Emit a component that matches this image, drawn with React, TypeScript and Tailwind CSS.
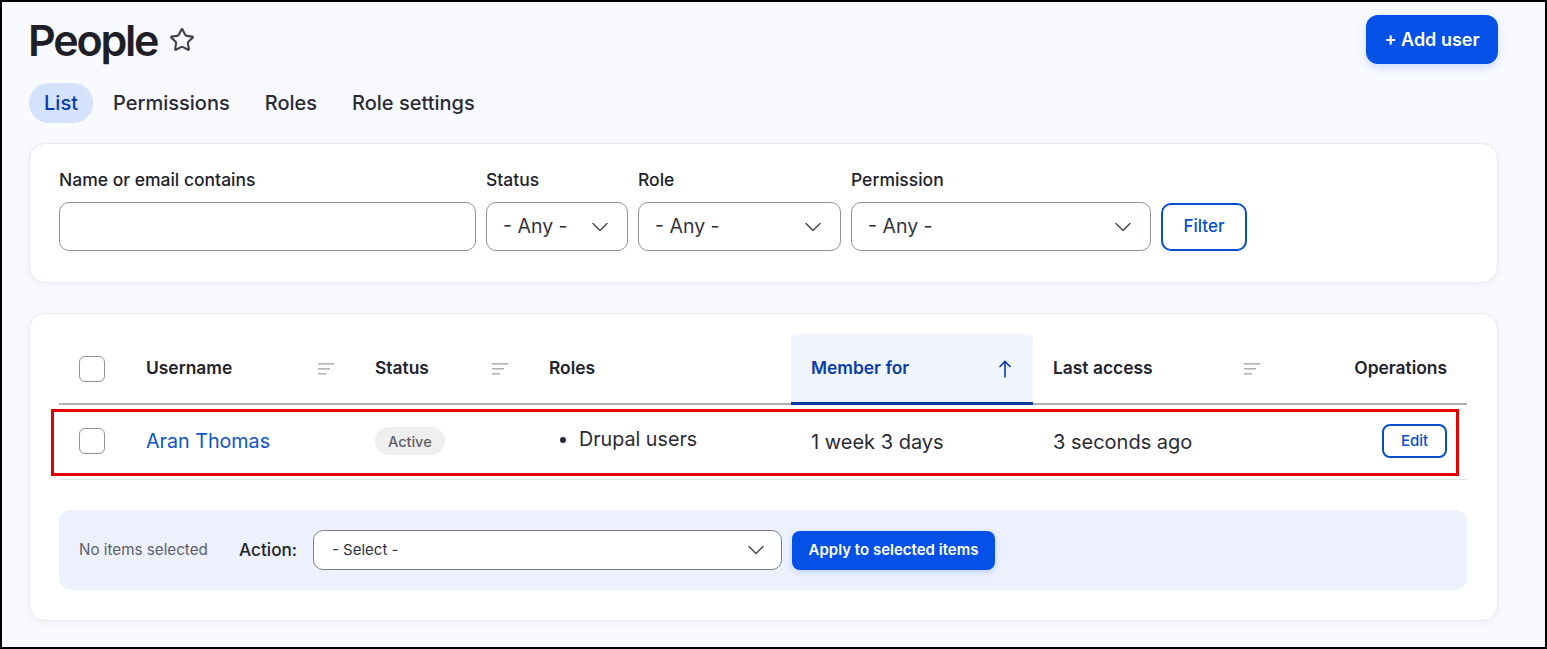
import React from 'react';
import { ChevronDown, Star } from 'lucide-react';

const SortIcon = () => (
  <svg width="16" height="12" viewBox="0 0 16 12" className="shrink-0" fill="#b4b4b8">
    <rect x="0" y="0" width="16" height="1.6" />
    <rect x="0" y="5" width="12" height="1.6" />
    <rect x="0" y="10" width="8" height="1.6" />
  </svg>
);

const SortedArrow = () => (
  <svg width="16" height="18" viewBox="0 0 16 18" fill="none" stroke="currentColor" strokeWidth="1.6" className="shrink-0">
    <path d="M8 17.5V1.5" />
    <path d="M2.5 7L8 1.5L13.5 7" />
  </svg>
);

const Checkbox = () => (
  <input
    type="checkbox"
    className="appearance-none block w-[26px] h-[26px] bg-white border border-[#8e929c] rounded-[6px]"
  />
);

const FakeSelect = ({ label, className }: { label: string; className: string }) => (
  <div
    className={`h-[49px] bg-white border border-[#919297] rounded-[10px] flex items-center justify-between pl-[16px] pr-[13px] text-[19.5px] text-[#33333d] ${className}`}
  >
    <span className="pt-px">{label}</span>
    <ChevronDown size={28} strokeWidth={1.15} className="text-[#44444c]" />
  </div>
);

const Field = ({ label, children }: { label: string; children: React.ReactNode }) => (
  <div className="flex flex-col gap-[10px]">
    <label className="text-[17.5px] leading-[24px] font-medium text-[#22222b]">{label}</label>
    {children}
  </div>
);

const HeadCell = ({ label }: { label: string }) => (
  <div className="flex items-center justify-between pl-5 pr-[21px] text-[17.4px] font-semibold text-[#22222b]">
    <span>{label}</span>
    <SortIcon />
  </div>
);

export default function App() {
  return (
    <div className="relative w-[1547px] h-[649px] overflow-hidden border-2 border-black bg-[#f8faff] font-['Inter',sans-serif]">
      <div className="pl-[27px] pr-[47px]">
        {/* Title */}
        <div className="flex items-start justify-between pt-[13px] h-[81px]">
          <div className="flex items-center gap-[12px] h-[50px]">
            <h1 className="-ml-px text-[43px] leading-[50px] font-semibold tracking-[-2.2px] text-[#1f1f28]">People</h1>
            <Star size={26} strokeWidth={2} className="text-[#44444c]" />
          </div>
          <button className="w-[132px] h-[49px] bg-[#0550e6] text-white rounded-[12px] text-[18px] font-semibold shadow-[0_3px_10px_rgba(5,80,230,0.2)]">
            + Add user
          </button>
        </div>

        {/* Tabs */}
        <nav className="flex items-center gap-[5px] h-[40px] text-[20px] font-medium text-[#2a2a35]">
          <a className="h-[40px] w-[64px] flex items-center justify-center rounded-full bg-[#d4e2fb] text-[#0a3cab]">List</a>
          <a className="px-[15px]">Permissions</a>
          <a className="px-[15px]">Roles</a>
          <a className="px-[15px]">Role settings</a>
        </nav>

        {/* Filters */}
        <section className="mt-[20px] h-[140px] bg-white rounded-[16px] border border-[#e8eaf0] shadow-[0_2px_8px_rgba(30,40,80,0.05)] px-[29px] pt-[24px] flex items-start gap-[10px]">
          <Field label="Name or email contains">
            <input className="w-[417px] h-[49px] bg-white border border-[#919297] rounded-[10px]" />
          </Field>
          <Field label="Status">
            <FakeSelect label="- Any -" className="w-[142px]" />
          </Field>
          <Field label="Role">
            <FakeSelect label="- Any -" className="w-[203px]" />
          </Field>
          <Field label="Permission">
            <FakeSelect label="- Any -" className="w-[300px]" />
          </Field>
          <button className="mt-[35px] w-[86px] h-[48px] bg-white border-2 border-[#0550c8] rounded-[10px] text-[17px] font-medium text-[#0550c8]">
            Filter
          </button>
        </section>

        {/* Users table */}
        <section className="mt-[30px] h-[308px] bg-white rounded-[16px] border border-[#e8eaf0] shadow-[0_2px_8px_rgba(30,40,80,0.05)] pl-[29px] pr-[30px] pt-[20px]">
          <div className="grid grid-cols-[67px_229px_174px_262px_242px_248px_1fr] h-[71px] border-b-2 border-[#b0b0b3]">
            <div className="flex items-center pl-5">
              <Checkbox />
            </div>
            <HeadCell label="Username" />
            <HeadCell label="Status" />
            <div className="flex items-center px-5 text-[17.4px] font-semibold text-[#22222b]">Roles</div>
            <div className="relative flex items-center justify-between pl-5 pr-[20px] bg-[#f0f5fe] rounded-t-[6px] text-[17.4px] font-semibold text-[#0a3cab]">
              <span>Member for</span>
              <SortedArrow />
              <div className="absolute left-0 right-0 -bottom-[2px] h-[3px] bg-[#0a3c9e]" />
            </div>
            <HeadCell label="Last access" />
            <div className="flex items-center justify-end pr-5 text-[17.4px] font-semibold text-[#22222b]">Operations</div>
          </div>

          <div className="grid grid-cols-[67px_229px_174px_262px_242px_248px_1fr] h-[75px] border-b border-[#e4e4e8] items-center text-[20px] text-[#2a2a35]">
            <div className="pl-5 -mt-[2px]">
              <Checkbox />
            </div>
            <a className="pl-5 text-[19.7px] text-[#0f52c8]">Aran Thomas</a>
            <div className="pl-5 -mt-[4px]">
              <span className="inline-flex items-center h-[28px] px-[13px] rounded-full bg-[#efefef] text-[14.5px] font-medium text-[#5c5c64]">
                Active
              </span>
            </div>
            <ul className="pl-[50px] -mt-[5px] text-[19.7px] list-disc">
              <li>Drupal users</li>
            </ul>
            <div className="pl-5">1 week 3 days</div>
            <div className="pl-5">3 seconds ago</div>
            <div className="flex justify-end pr-5 -mt-[2px]">
              <button className="w-[65px] h-[34px] bg-white border-2 border-[#0550c8] rounded-[8px] text-[15px] font-medium text-[#0550c8]">
                Edit
              </button>
            </div>
          </div>

          {/* Bulk actions */}
          <div className="mt-[30px] h-[80px] rounded-[12px] bg-[#edf1fd] flex items-center pl-5">
            <span className="w-[160px] text-[15.2px] text-[#5c5f6b]">No items selected</span>
            <span className="w-[74px] text-[17.2px] font-medium text-[#22222b]">Action:</span>
            <div className="w-[469px] h-[40px] bg-white border border-[#7e818c] rounded-[10px] flex items-center justify-between pl-[18px] pr-[11px] text-[15px] text-[#33333d]">
              <span>- Select -</span>
              <ChevronDown size={28} strokeWidth={1.15} className="text-[#44444c]" />
            </div>
            <button className="ml-[10px] w-[203px] h-[39px] bg-[#0550e6] text-white rounded-[8px] text-[15px] font-semibold shadow-[0_2px_6px_rgba(5,80,230,0.2)]">
              Apply to selected items
            </button>
          </div>
        </section>
      </div>

      {/* Red annotation box */}
      <div className="absolute left-[49px] top-[407px] w-[1408px] h-[67px] border-[3px] border-[#e60000]" />
    </div>
  );
}
